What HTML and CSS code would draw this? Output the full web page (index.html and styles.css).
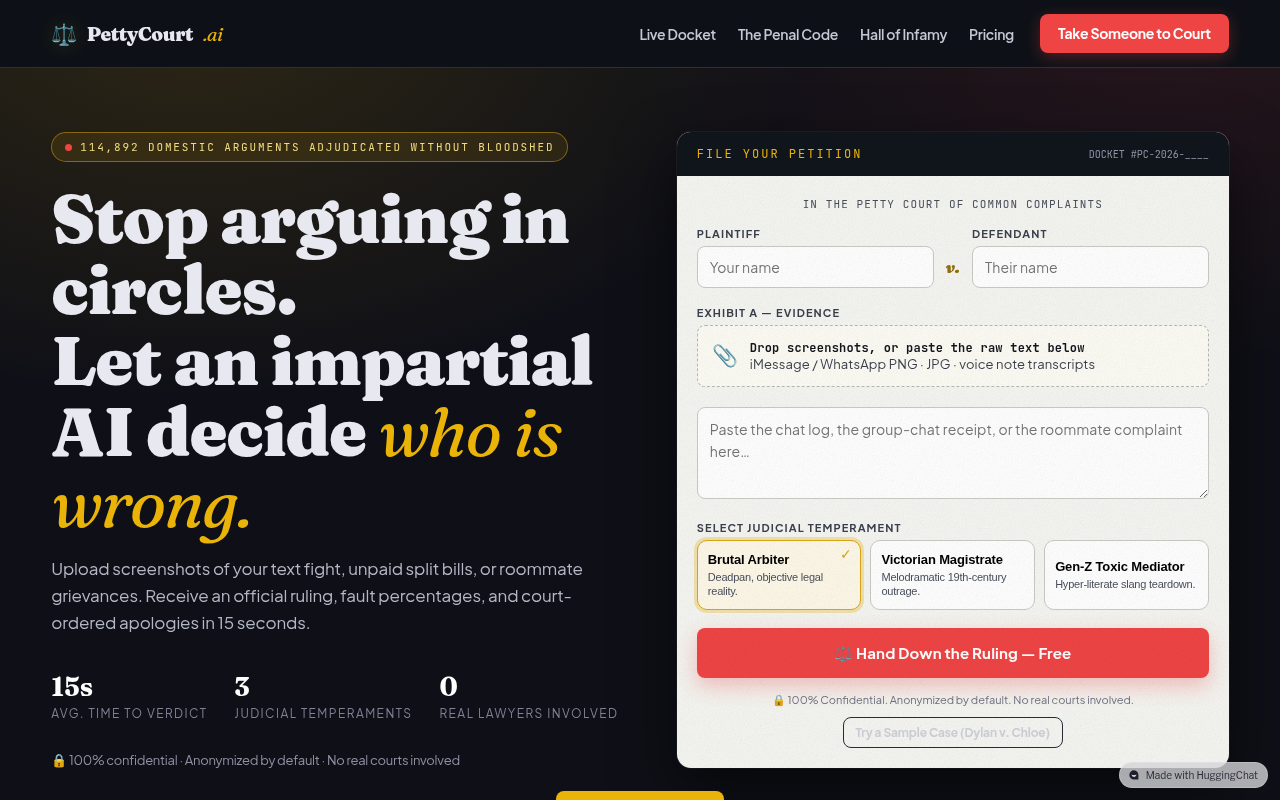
FILE: index.html
```html
<!DOCTYPE html>
<html lang="en">
<head>
  <meta charset="UTF-8">
  <meta name="viewport" content="width=device-width, initial-scale=1">
  <title>PettyCourt.ai</title>
  <link rel="stylesheet" href="styles.css">
</head>
<body>
  <header class="nav">
    <a class="brand" href="#">
      <span class="brand-icon">⚖️</span>
      <span class="brand-name">PettyCourt</span>
      <span class="brand-tld">.ai</span>
    </a>
    <nav class="nav-links">
      <a href="#docket">Live Docket</a>
      <a href="#code">The Penal Code</a>
      <a href="#infamy">Hall of Infamy</a>
      <a href="#pricing">Pricing</a>
      <a class="btn-nav" href="#petition">Take Someone to Court</a>
    </nav>
  </header>

  <main class="hero">
    <section class="pitch">
      <div class="badge"><span class="dot"></span>114,892 DOMESTIC ARGUMENTS ADJUDICATED WITHOUT BLOODSHED</div>
      <h1>Stop arguing in circles.<br>Let an impartial AI decide <em>who is wrong.</em></h1>
      <p class="lead">Upload screenshots of your text fight, unpaid split bills, or roommate grievances. Receive an official ruling, fault percentages, and court-ordered apologies in 15 seconds.</p>
      <div class="stats">
        <div class="stat"><strong>15s</strong><span>AVG. TIME TO VERDICT</span></div>
        <div class="stat"><strong>3</strong><span>JUDICIAL TEMPERAMENTS</span></div>
        <div class="stat"><strong>0</strong><span>REAL LAWYERS INVOLVED</span></div>
      </div>
      <p class="trust">🔒 100% confidential · Anonymized by default · No real courts involved</p>
    </section>

    <form class="card" id="petition">
      <div class="card-head">
        <span class="card-title">FILE YOUR PETITION</span>
        <span class="card-docket">DOCKET #PC-2026-____</span>
      </div>
      <div class="card-body">
        <p class="court">IN THE PETTY COURT OF COMMON COMPLAINTS</p>

        <div class="parties">
          <div class="field">
            <label for="plaintiff">PLAINTIFF</label>
            <input type="text" id="plaintiff" placeholder="Your name">
          </div>
          <span class="versus">v.</span>
          <div class="field">
            <label for="defendant">DEFENDANT</label>
            <input type="text" id="defendant" placeholder="Their name">
          </div>
        </div>

        <div class="field evidence">
          <label for="evidence">EXHIBIT A — EVIDENCE</label>
          <button type="button" class="dropzone">
            <span class="clip">📎</span>
            <span class="drop-text">
              <b>Drop screenshots, or paste the raw text below</b>
              <span>iMessage / WhatsApp PNG · JPG · voice note transcripts</span>
            </span>
          </button>
          <textarea id="evidence" placeholder="Paste the chat log, the group-chat receipt, or the roommate complaint here…"></textarea>
        </div>

        <div class="field">
          <span class="label">SELECT JUDICIAL TEMPERAMENT</span>
          <div class="judges">
            <button type="button" class="judge active">
              <b>Brutal Arbiter</b>
              <span>Deadpan, objective legal reality.</span>
            </button>
            <button type="button" class="judge">
              <b>Victorian Magistrate</b>
              <span>Melodramatic 19th-century outrage.</span>
            </button>
            <button type="button" class="judge">
              <b>Gen-Z Toxic Mediator</b>
              <span>Hyper-literate slang teardown.</span>
            </button>
          </div>
        </div>

        <button type="submit" class="btn-rule">⚖️ Hand Down the Ruling — Free</button>
        <p class="fine">🔒 100% Confidential. Anonymized by default. No real courts involved.</p>
        <button type="button" class="btn-sample">Try a Sample Case (Dylan v. Chloe)</button>
      </div>
    </form>
  </main>

  <div class="toast"></div>

  <a class="made-with" href="#">
    <svg width="10" height="10" viewBox="0 0 10 10" aria-hidden="true">
      <path d="M5 0.3A4.6 4.6 0 1 0 5 9.6H9.4V5A4.5 4.5 0 0 0 5 0.3Z" fill="#1c1e2c"/>
      <path d="M2.6 4.3C3.4 5.5 6.6 5.5 7.4 4.3C7.4 7.9 2.6 7.9 2.6 4.3Z" fill="#d4d4d8"/>
    </svg>
    Made with HuggingChat
  </a>
</body>
</html>
```
FILE: styles.css
```css
:root {
  --ink: #0d1117;
  --gold: #eab308;
  --red: #ef4444;
  --sans: "Plus Jakarta Sans", "Inter", sans-serif;
  --serif: "Fraunces", "Liberation Serif", serif;
  --mono: "JetBrains Mono", "Liberation Mono", monospace;
}
* {
  box-sizing: border-box;
}
body {
  margin: 0;
  min-height: 100vh;
  overflow-x: hidden;
  color: #e8e8f0;
  font-family: var(--sans);
  background:
    radial-gradient(ellipse 620px 400px at 15% 0, rgba(234, 179, 8, 0.14), transparent),
    radial-gradient(ellipse 540px 360px at 92% 0, rgba(239, 68, 68, 0.11), transparent),
    #0f1017;
}
p, h1 {
  margin: 0;
}
a {
  color: inherit;
  text-decoration: none;
}

/* nav */
.nav {
  display: flex;
  align-items: center;
  justify-content: space-between;
  height: 68px;
  padding: 0 4%;
  background: var(--ink);
  border-bottom: 1px solid #2a3040;
}
.brand {
  display: flex;
  align-items: center;
  gap: 10px;
  font-family: var(--serif);
  font-size: 19px;
  letter-spacing: -0.02em;
}
.brand-icon {
  font-size: 21px;
  text-shadow: 0 0 20px rgba(234, 179, 8, 0.3);
}
.brand-name {
  font-weight: 900;
}
.brand-tld {
  color: var(--gold);
  font-style: italic;
}
.nav-links {
  display: flex;
  align-items: center;
  gap: 22px;
  font-size: 14px;
  font-weight: 600;
  letter-spacing: -0.02em;
  color: #c5c8d4;
}
.btn-nav {
  margin-left: 4px;
  padding: 0 18px;
  line-height: 39px;
  border-radius: 8px;
  color: #fff;
  font-weight: 700;
  background: var(--red);
  box-shadow: 0 4px 16px rgba(239, 68, 68, 0.3);
}

/* hero */
.hero {
  display: grid;
  grid-template-columns: minmax(0, 105fr) minmax(0, 100fr);
  gap: 46px;
  align-items: start;
  padding: 64px 4% 32px;
}
.badge {
  display: inline-flex;
  align-items: center;
  gap: 8px;
  height: 30px;
  padding: 0 12px 0 13px;
  border: 1px solid rgba(234, 179, 8, 0.45);
  border-radius: 15px;
  background: rgba(234, 179, 8, 0.1);
  color: #f0dc82;
  font-family: var(--mono);
  font-size: 11px;
  letter-spacing: 0.17em;
  white-space: nowrap;
}
.dot {
  width: 7px;
  height: 7px;
  border-radius: 50%;
  background: var(--red);
}
h1 {
  margin-top: 21px;
  font-family: var(--serif);
  font-size: 68px;
  font-weight: 900;
  line-height: 71px;
  letter-spacing: -0.02em;
}
h1 em {
  color: var(--gold);
  font-weight: 500;
}
.lead {
  max-width: 560px;
  margin-top: 17px;
  color: #b4b7c5;
  font-size: 17px;
  line-height: 27px;
  letter-spacing: -0.01em;
}
.stats {
  display: flex;
  gap: 27px;
  margin-top: 35px;
}
.stat strong {
  display: block;
  color: #fff;
  font-family: var(--serif);
  font-size: 26px;
  line-height: 32px;
}
.stat span {
  display: block;
  color: #7d8294;
  font-size: 12px;
  line-height: 22px;
  letter-spacing: 0.12em;
  white-space: nowrap;
}
.trust {
  margin-top: 25px;
  color: #8e92a3;
  font-size: 13px;
  line-height: 20px;
  letter-spacing: -0.02em;
}

/* petition card */
.card {
  position: relative;
  overflow: hidden;
  border-radius: 14px;
  color: #12151c;
  background: #f5f5f1;
  box-shadow: 0 24px 60px rgba(0, 0, 0, 0.55), 0 0 0 1px rgba(255, 255, 255, 0.06);
}
/* paper grain */
.card::after {
  content: "";
  position: absolute;
  inset: 44px 0 0;
  pointer-events: none;
  opacity: 0.17;
  mix-blend-mode: multiply;
  background: url("data:image/svg+xml,%3Csvg xmlns='http://www.w3.org/2000/svg' width='160' height='160'%3E%3Cfilter id='n'%3E%3CfeTurbulence type='fractalNoise' baseFrequency='.8' numOctaves='3' stitchTiles='stitch'/%3E%3CfeColorMatrix type='saturate' values='0'/%3E%3C/filter%3E%3Crect width='160' height='160' filter='url(%23n)'/%3E%3C/svg%3E");
}
.card-head {
  display: flex;
  align-items: center;
  justify-content: space-between;
  height: 44px;
  padding: 0 20px;
  background: #10141b;
  font-family: var(--mono);
}
.card-title {
  color: var(--gold);
  font-size: 12px;
  letter-spacing: 2px;
}
.card-docket {
  color: #8e92a3;
  font-size: 10px;
}
.card-body {
  display: flex;
  flex-direction: column;
  padding: 20px;
}
.court {
  margin-bottom: 12px;
  color: #4a4f5c;
  font-family: var(--mono);
  font-size: 11px;
  line-height: 17px;
  letter-spacing: 0.1em;
  text-align: center;
}
.field {
  display: flex;
  flex-direction: column;
}
.field label,
.label {
  margin-bottom: 3px;
  color: #3a3f4c;
  font-size: 11px;
  font-weight: 700;
  line-height: 18px;
  letter-spacing: 0.1em;
}
.parties {
  display: grid;
  grid-template-columns: 1fr auto 1fr;
  gap: 12px;
  align-items: end;
  margin-bottom: 16px;
}
.versus {
  color: #92700c;
  font-family: var(--serif);
  font-size: 16px;
  font-style: italic;
  font-weight: 900;
  line-height: 42px;
}
input, textarea {
  width: 100%;
  padding: 0 12px;
  border: 1px solid #cbcbc6;
  border-radius: 8px;
  background: #fff;
  color: #12151c;
  font-family: var(--sans);
  font-size: 14px;
  letter-spacing: 0.01em;
}
input {
  height: 42px;
}
input::placeholder,
textarea::placeholder {
  color: #757575;
}
textarea {
  height: 92px;
  margin-top: 20px;
  padding: 10px 12px;
  line-height: 22px;
  resize: vertical;
}
.dropzone {
  display: flex;
  align-items: center;
  gap: 12px;
  height: 62px;
  padding: 0 14px;
  border: 1px dashed #b9b9b2;
  border-radius: 8px;
  background: #fcfbf4;
  color: inherit;
  text-align: left;
}
.clip {
  font-size: 21px;
}
.drop-text b {
  display: block;
  font-family: var(--mono);
  font-size: 12px;
  line-height: 16px;
  letter-spacing: 0.02em;
}
.drop-text span {
  display: block;
  color: #3a3f4c;
  font-family: var(--sans);
  font-size: 13px;
  line-height: 17px;
  letter-spacing: 0.01em;
}
.evidence {
  margin-bottom: 20px;
}
.judges {
  display: grid;
  grid-template-columns: repeat(3, 1fr);
  gap: 9px;
}
.judge {
  position: relative;
  min-height: 70px;
  padding: 10px 6px 10px 10px;
  border: 1px solid #cbcbc6;
  border-radius: 10px;
  background: #fff;
  font-family: "Liberation Sans", Arial, sans-serif;
  text-align: left;
}
.judge b {
  display: block;
  color: #000;
  font-size: 13px;
  line-height: 16px;
  letter-spacing: -0.01em;
}
.judge span {
  display: block;
  margin-top: 2px;
  color: #4a4f5c;
  font-size: 11px;
  line-height: 14px;
  letter-spacing: -0.02em;
}
.judge.active {
  border-color: #dba617;
  background: #fdf8e7;
  box-shadow: 0 0 0 3px rgba(234, 179, 8, 0.3);
}
.judge.active::after {
  content: "✓";
  position: absolute;
  top: 5px;
  right: 8px;
  color: #dba617;
  font-size: 14px;
}
.btn-rule {
  height: 50px;
  margin-top: 18px;
  border: 0;
  border-radius: 8px;
  background: var(--red);
  color: #fff;
  font-family: var(--sans);
  font-size: 15px;
  font-weight: 700;
  letter-spacing: 0.01em;
  box-shadow: 0 8px 20px rgba(239, 68, 68, 0.3);
}
.fine {
  margin: 12px 0 7px;
  color: #6b7080;
  font-size: 11px;
  line-height: 20px;
  text-align: center;
}
.btn-sample {
  align-self: center;
  height: 31px;
  padding: 0 12px;
  border: 1px solid #272c38;
  border-radius: 8px;
  background: transparent;
  color: #cfd1da;
  font-family: var(--sans);
  font-size: 12px;
  font-weight: 700;
  letter-spacing: -0.01em;
}

/* floating bits */
.toast {
  position: fixed;
  bottom: -31px;
  left: 50%;
  width: 168px;
  height: 40px;
  margin-left: -84px;
  border-radius: 8px;
  background: var(--gold);
}
.made-with {
  position: fixed;
  right: 12px;
  bottom: 12px;
  display: flex;
  align-items: center;
  gap: 7px;
  height: 26px;
  padding: 0 9px;
  border: 1px solid rgba(255, 255, 255, 0.2);
  border-radius: 13px;
  background: rgba(212, 212, 216, 0.8);
  color: #2a2c38;
  font-family: "Libre Franklin", "Liberation Sans", sans-serif;
  font-size: 10px;
}
```
